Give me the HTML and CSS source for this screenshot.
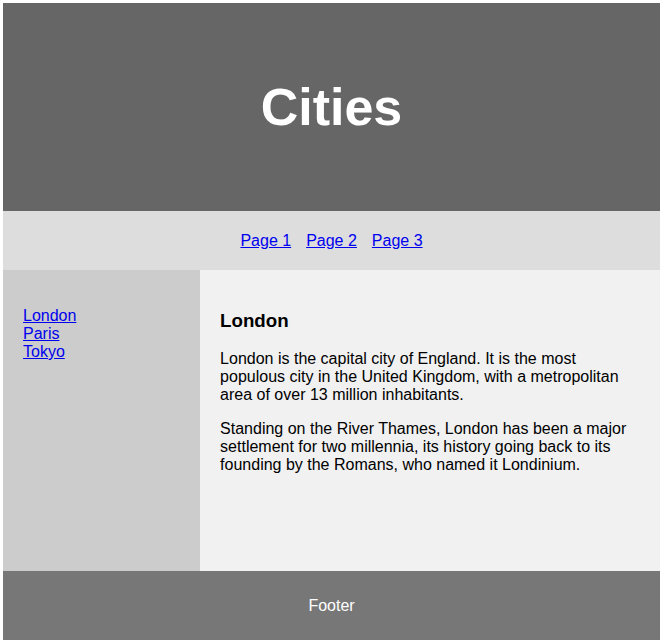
FILE: index.html
```html
<!DOCTYPE html>
<html lang="en">
<head>
<meta charset="utf-8">
<title>Cities</title>
<link rel="stylesheet" href="styles.css">
</head>
<body>
<header class="header"><h2 class="title">Cities</h2></header>
<nav class="topnav">
  <a href="#">Page 1</a>
  <a href="#">Page 2</a>
  <a href="#">Page 3</a>
</nav>
<section class="main">
  <aside class="side">
    <ul class="side-list">
      <li><a href="#">London</a></li>
      <li><a href="#">Paris</a></li>
      <li><a href="#">Tokyo</a></li>
    </ul>
  </aside>
  <article class="article">
    <h3 class="article-title">London</h3>
    <p>London is the capital city of England. It is the most populous city in the United Kingdom, with a metropolitan area of over 13 million inhabitants.</p>
    <p>Standing on the River Thames, London has been a major settlement for two millennia, its history going back to its founding by the Romans, who named it Londinium.</p>
  </article>
</section>
<footer class="footer">Footer</footer>
</body>
</html>
```
FILE: styles.css
```css
* { box-sizing: border-box; }
html { background: #fff; }
body {
  margin: 3px;
  font-family: "Liberation Sans", Arial, sans-serif;
  font-size: 16px;
  color: #000;
}
.header {
  height: 208px;
  background: #666;
  color: #fff;
  display: flex;
  align-items: center;
  justify-content: center;
}
.title {
  margin: 0;
  font-size: 52px;
  font-weight: bold;
}
.topnav {
  height: 59px;
  background: #ddd;
  display: flex;
  align-items: center;
  justify-content: center;
}
.topnav a {
  color: #0000ee;
  padding: 0 6px;
  margin: 0 1.5px;
}
.main {
  display: flex;
  height: 301px;
}
.side {
  width: 30%;
  background: #ccc;
  padding: 21px 20px 20px;
}
.side-list {
  list-style: none;
  padding: 0;
  margin: 16px 0;
}
.side-list a { color: #0000ee; }
.article {
  width: 70%;
  background: #f1f1f1;
  padding: 21px 20px 20px;
}
.article-title {
  font-size: 18.72px;
  margin: 18.72px 0;
}
.article p { margin: 16px 0; }
.footer {
  height: 69px;
  background: #777;
  color: #fff;
  display: flex;
  align-items: center;
  justify-content: center;
}
```
